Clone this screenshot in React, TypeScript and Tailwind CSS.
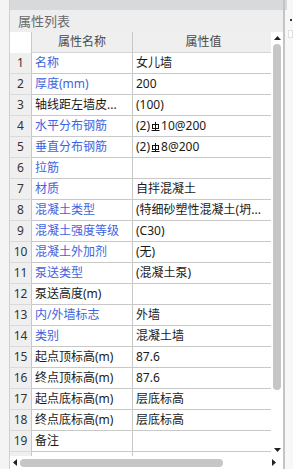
import React from "react";

type Row = { name: string; value: React.ReactNode; blue: boolean };

const Rebar = () => (
  <svg width="9" height="10" viewBox="0 0 9 10" className="inline-block align-top mt-[1px] mx-[1px]">
    <path d="M4.5 0V9" stroke="#111" strokeWidth="1" fill="none" />
    <rect x="1.5" y="2.5" width="6" height="4" stroke="#111" strokeWidth="1" fill="none" />
    <path d="M0.5 8.5H8.5" stroke="#111" strokeWidth="1" fill="none" />
  </svg>
);

const rows: Row[] = [
  { name: "名称", value: "女儿墙", blue: true },
  { name: "厚度(mm)", value: "200", blue: true },
  { name: "轴线距左墙皮...", value: "(100)", blue: false },
  { name: "水平分布钢筋", value: <>(2)<Rebar />10@200</>, blue: true },
  { name: "垂直分布钢筋", value: <>(2)<Rebar />8@200</>, blue: true },
  { name: "拉筋", value: "", blue: true },
  { name: "材质", value: "自拌混凝土", blue: true },
  { name: "混凝土类型", value: "(特细砂塑性混凝土(坍...", blue: true },
  { name: "混凝土强度等级", value: "(C30)", blue: true },
  { name: "混凝土外加剂", value: "(无)", blue: true },
  { name: "泵送类型", value: "(混凝土泵)", blue: true },
  { name: "泵送高度(m)", value: "", blue: false },
  { name: "内/外墙标志", value: "外墙", blue: true },
  { name: "类别", value: "混凝土墙", blue: true },
  { name: "起点顶标高(m)", value: "87.6", blue: false },
  { name: "终点顶标高(m)", value: "87.6", blue: false },
  { name: "起点底标高(m)", value: "层底标高", blue: false },
  { name: "终点底标高(m)", value: "层底标高", blue: false },
  { name: "备注", value: "", blue: false },
];

export default function App() {
  return (
    <div
      className="w-[293px] h-[469px] bg-white flex overflow-hidden text-[12px] text-[#1a1a1a]"
      style={{ fontFamily: '"Noto Sans", "Noto Sans CJK SC", sans-serif' }}
    >
      {/* left edge */}
      <div className="w-[10px] shrink-0 bg-[#f4f4f4] border-r border-[#cfcfcf]" />

      {/* property panel */}
      <div className="w-[273px] shrink-0 flex flex-col">
        <div className="h-[10px] bg-[#d8d9db]" />
        <div className="h-[22px] bg-[#eeeeee] flex items-center pl-[8px] text-[13px] text-[#6a6a6a] leading-none">
          属性列表
        </div>

        <div className="flex h-[424px]">
          {/* table */}
          <div className="w-[261px] flex flex-col">
            <div className="flex h-[21px] leading-none">
              <div className="w-[22px] bg-white border-r border-[#c8c8c8]" />
              <div className="w-[101px] bg-[#efefef] border-r border-[#c8c8c8] border-b border-b-[#d4d4d4] flex items-center justify-center text-[#4a4a4a]">
                属性名称
              </div>
              <div className="flex-1 bg-[#efefef] border-b border-[#d4d4d4] flex items-center justify-center pl-[3px] text-[#4a4a4a]">
                属性值
              </div>
            </div>
            {rows.map((r, i) => (
              <div key={i} className="flex h-[21px] leading-none">
                <div className="w-[22px] bg-[#efefef] border-r border-[#c8c8c8] border-b border-b-[#dadada] flex items-center justify-center text-[#333]">
                  {i + 1}
                </div>
                <div
                  className={
                    "w-[101px] border-r border-b border-[#c8c8c8] flex items-center pl-[3px] whitespace-nowrap overflow-hidden " +
                    (r.blue ? "text-[#3f63df]" : "text-[#1a1a1a]")
                  }
                >
                  {r.name}
                </div>
                <div className="flex-1 border-b border-[#c8c8c8] flex items-center pl-[3px] whitespace-nowrap overflow-hidden">
                  {r.value}
                </div>
              </div>
            ))}
            <div className="flex flex-1">
              <div className="w-[22px] bg-[#efefef] border-r border-[#c8c8c8]" />
              <div className="w-[101px] border-r border-[#c8c8c8]" />
            </div>
          </div>

          {/* vertical scrollbar */}
          <div className="w-[12px] flex flex-col items-center pt-[4px] pb-[4px]">
            <svg width="7" height="4" viewBox="0 0 7 4">
              <path d="M0 4L3.5 0L7 4Z" fill="#222" />
            </svg>
            <div className="mt-[4px] w-[8px] h-[346px] rounded-full bg-[#c6c6c6]" />
            <div className="flex-1" />
            <svg width="7" height="4" viewBox="0 0 7 4">
              <path d="M0 0L7 0L3.5 4Z" fill="#222" />
            </svg>
          </div>
        </div>

        {/* horizontal scrollbar */}
        <div className="h-[13px] flex items-center pl-[3px]">
          <svg width="4" height="7" viewBox="0 0 4 7">
            <path d="M4 0L0 3.5L4 7Z" fill="#222" />
          </svg>
          <div className="ml-[3px] w-[203px] h-[8px] rounded-full bg-[#c6c6c6]" />
          <div className="flex-1" />
          <svg width="4" height="7" viewBox="0 0 4 7" className="mr-[7px]">
            <path d="M0 0L4 3.5L0 7Z" fill="#222" />
          </svg>
        </div>
      </div>

      {/* neighbouring panel edge */}
      <div className="flex-1 border-l-2 border-[#c4c4c4] bg-[#f7f7f7] flex flex-col">
        <div className="h-[10px] bg-[#d8d9db] w-[2px]" />
        <div className="mt-[9px] ml-[5px] w-[2px] h-[2px] bg-[#333]" />
        <div className="mt-[9px] ml-[3px] h-[8px] bg-white border border-[#e0e0e0]" />
      </div>
    </div>
  );
}
